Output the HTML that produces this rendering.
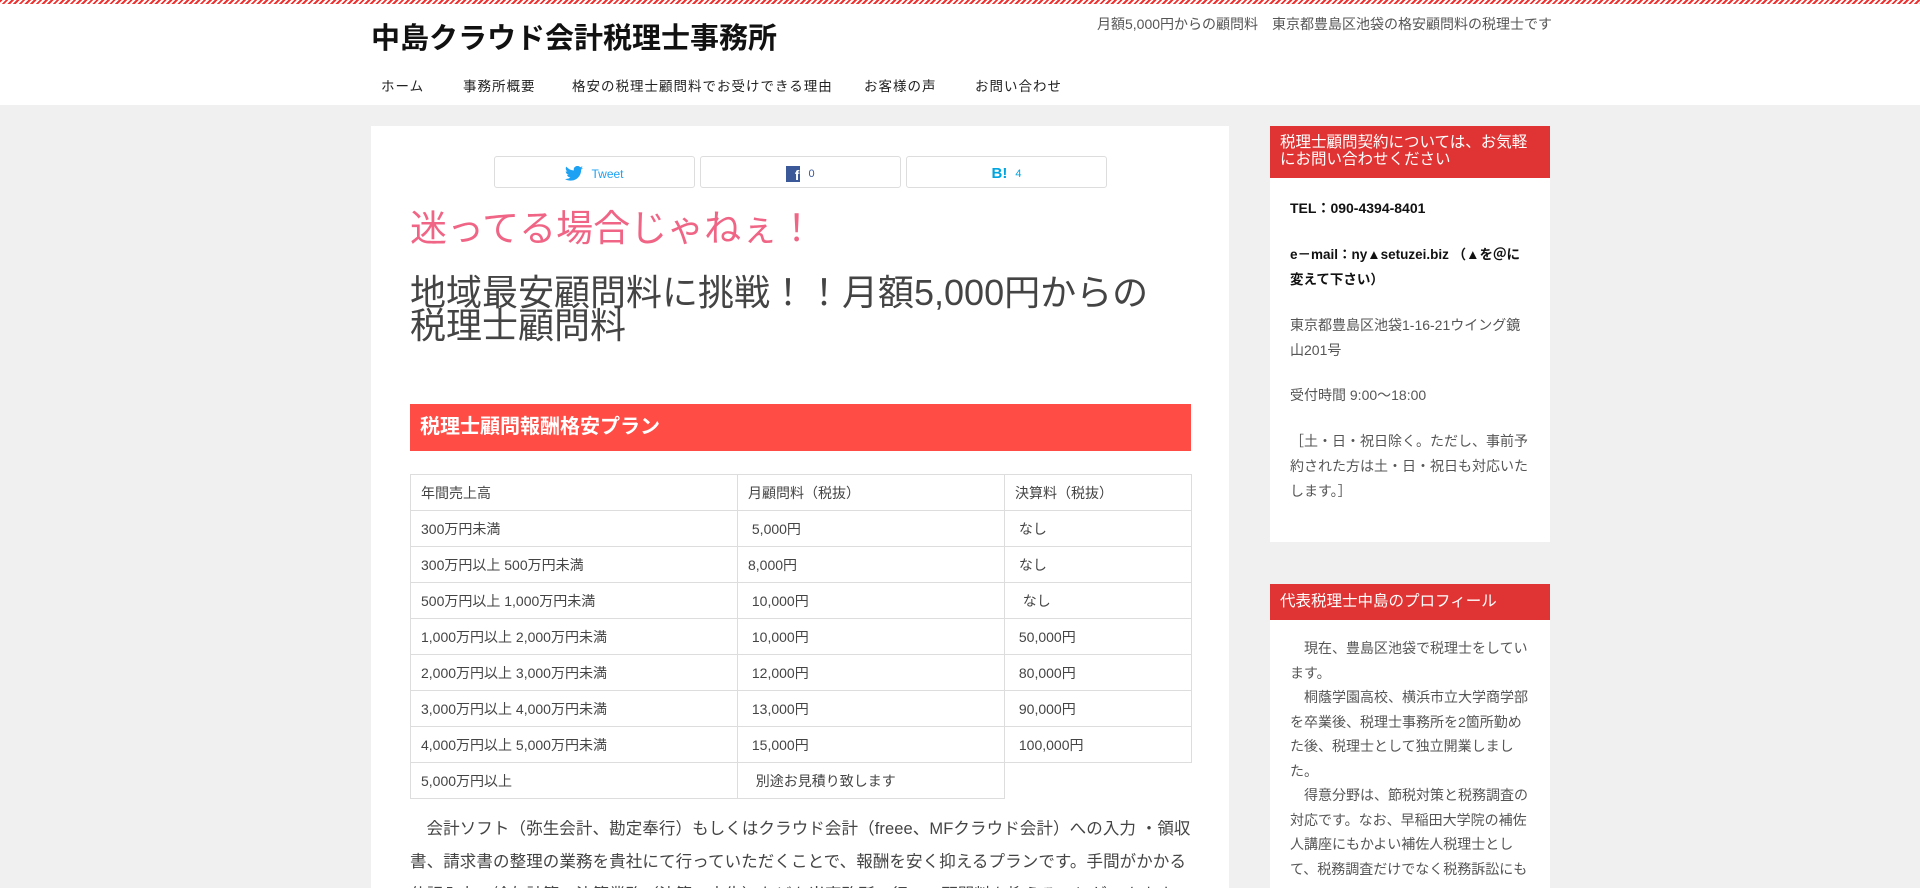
<!DOCTYPE html>
<html><head><meta charset="utf-8">
<style>
*{margin:0;padding:0;box-sizing:border-box}
html,body{width:1920px;height:888px;overflow:hidden}
body{background:#f0f0f0;font-family:"Liberation Sans","Noto Sans CJK JP",sans-serif;color:#444;position:relative}
.stripe{position:absolute;top:0;left:0;width:1920px;height:4px;background:repeating-linear-gradient(135deg,#e33 0 2px,#fff 2px 4px)}
header{position:absolute;top:0;left:0;width:1920px;height:105px;background:#fff}
.title{position:absolute;left:371px;top:15px;font-size:29px;font-weight:bold;color:#111}
.sub{position:absolute;left:1097px;top:14px;font-size:14px;color:#555;white-space:nowrap}
nav{position:absolute;top:75px;left:381px;font-size:13.5px;color:#222;letter-spacing:1px}
nav span{position:absolute;white-space:nowrap;top:0}
.main{position:absolute;left:371px;top:126px;width:858px;height:762px;background:#fff;overflow:hidden}
.btn{position:absolute;top:30px;height:32px;width:201px;border:1px solid #ddd;border-radius:3px;font-size:11px;color:#1da1f2;display:flex;align-items:center;justify-content:center;gap:8px;padding-top:3px}
.pink{position:absolute;left:39px;top:72px;font-size:37px;color:#f06585;white-space:nowrap}
.h1{position:absolute;left:39px;top:150px;font-size:36px;line-height:33px;color:#444;width:760px}
.bar{position:absolute;left:39px;top:278px;width:781px;height:47px;background:#ff4c44;color:#fff;font-weight:bold;font-size:20px;line-height:47px;padding-left:10px}
table{position:absolute;left:39px;top:348px;border-collapse:collapse;font-size:14px;color:#444}
td{border:1px solid #ddd;height:36px;padding:0 10px}
.p{position:absolute;left:39px;top:687px;width:786px;height:75px;overflow:hidden;font-size:16.5px;line-height:33px;letter-spacing:.1px;text-indent:1em}
.w{position:absolute;left:1270px;width:280px;background:#fff;overflow:hidden}
.wh{background:#e03434;color:#fff;font-size:15.5px;line-height:17px;padding:8px 10px 0 10px}
.wc{padding:0 20px;font-size:14px;color:#555;letter-spacing:0}
.wc p{line-height:25px}
</style></head><body>
<header>
<div class="stripe"></div>
<div class="title">中島クラウド会計税理士事務所</div>
<div class="sub">月額5,000円からの顧問料　東京都豊島区池袋の格安顧問料の税理士です</div>
<nav><span style="left:0">ホーム</span><span style="left:82px">事務所概要</span><span style="left:191px">格安の税理士顧問料でお受けできる理由</span><span style="left:483px">お客様の声</span><span style="left:594px">お問い合わせ</span></nav>
</header>
<div class="main">
<div class="btn" style="left:123px;font-size:12px"><svg width="18" height="15" viewBox="0 0 24 20"><path fill="#1da1f2" d="M24 2.4a10 10 0 0 1-2.8.8A5 5 0 0 0 23.3.4a10 10 0 0 1-3.1 1.2A4.9 4.9 0 0 0 11.8 6 14 14 0 0 1 1.7.9a4.9 4.9 0 0 0 1.5 6.6A4.9 4.9 0 0 1 1 6.9a4.9 4.9 0 0 0 3.9 4.9 5 5 0 0 1-2.2.1 4.9 4.9 0 0 0 4.6 3.4A9.9 9.9 0 0 1 0 17.3 14 14 0 0 0 7.5 19.5c9.1 0 14-7.5 14-14v-.6A10 10 0 0 0 24 2.4z"/></svg>Tweet</div>
<div class="btn" style="left:329px;color:#3b5998"><span style="display:inline-block;width:14px;height:16px;background:#3b5998;color:#fff;font-weight:bold;font-size:14px;line-height:18px;text-align:right;padding-right:1px">f</span>0</div>
<div class="btn" style="left:535px;color:#00a4de;font-weight:bold"><span style="font-size:15px">B!</span><span style="font-weight:normal">4</span></div>
<div class="pink">迷ってる場合じゃねぇ！</div>
<div class="h1">地域最安顧問料に挑戦！！月額5,000円からの税理士顧問料</div>
<div class="bar">税理士顧問報酬格安プラン</div>
<table>
<tr><td style="width:327px">年間売上高</td><td style="width:267px">月顧問料（税抜）</td><td style="width:187px">決算料（税抜）</td></tr>
<tr><td>300万円未満</td><td>&nbsp;5,000円</td><td>&nbsp;なし</td></tr>
<tr><td>300万円以上 500万円未満</td><td>8,000円</td><td>&nbsp;なし</td></tr>
<tr><td>500万円以上 1,000万円未満</td><td>&nbsp;10,000円</td><td>&nbsp;&nbsp;なし</td></tr>
<tr><td>1,000万円以上 2,000万円未満</td><td>&nbsp;10,000円</td><td>&nbsp;50,000円</td></tr>
<tr><td>2,000万円以上 3,000万円未満</td><td>&nbsp;12,000円</td><td>&nbsp;80,000円</td></tr>
<tr><td>3,000万円以上 4,000万円未満</td><td>&nbsp;13,000円</td><td>&nbsp;90,000円</td></tr>
<tr><td>4,000万円以上 5,000万円未満</td><td>&nbsp;15,000円</td><td>&nbsp;100,000円</td></tr>
<tr><td>5,000万円以上</td><td>&nbsp;&nbsp;別途お見積り致します</td><td style="border:none;border-left:1px solid #ddd"></td></tr>
</table>
<div class="p">会計ソフト（弥生会計、勘定奉行）もしくはクラウド会計（freee、MFクラウド会計）への入力 ・領収書、請求書の整理の業務を貴社にて行っていただくことで、報酬を安く抑えるプランです。手間がかかる仕訳入力・給与計算・決算業務（決算・申告）などを当事務所で行い、顧問料を抑えることができます。</div>
</div>
<div class="w" style="top:126px;height:416px">
<div class="wh" style="height:52px">税理士顧問契約については、お気軽にお問い合わせください</div>
<div class="wc">
<p style="margin-top:18px;color:#111;font-weight:bold">TEL：090-4394-8401</p>
<p style="margin-top:21px;color:#111;font-weight:bold;font-size:13.5px">e－mail：ny▲setuzei.biz （▲を＠に変えて下さい）</p>
<p style="margin-top:21px">東京都豊島区池袋1-16-21ウイング鏡山201号</p>
<p style="margin-top:20px">受付時間 9:00～18:00</p>
<p style="margin-top:21px">［土・日・祝日除く。ただし、事前予約された方は土・日・祝日も対応いたします。］</p>
</div></div>
<div class="w" style="top:584px;height:304px">
<div class="wh" style="height:36px;line-height:20px">代表税理士中島のプロフィール</div>
<div class="wc"><p style="margin-top:16px;line-height:24.5px;text-indent:1em">現在、豊島区池袋で税理士をしています。</p><p style="line-height:24.5px;text-indent:1em">桐蔭学園高校、横浜市立大学商学部を卒業後、税理士事務所を2箇所勤めた後、税理士として独立開業しました。</p><p style="line-height:24.5px;text-indent:1em">得意分野は、節税対策と税務調査の対応です。なお、早稲田大学院の補佐人講座にもかよい補佐人税理士として、税務調査だけでなく税務訴訟にも</p></div>
</div>
</body></html>
